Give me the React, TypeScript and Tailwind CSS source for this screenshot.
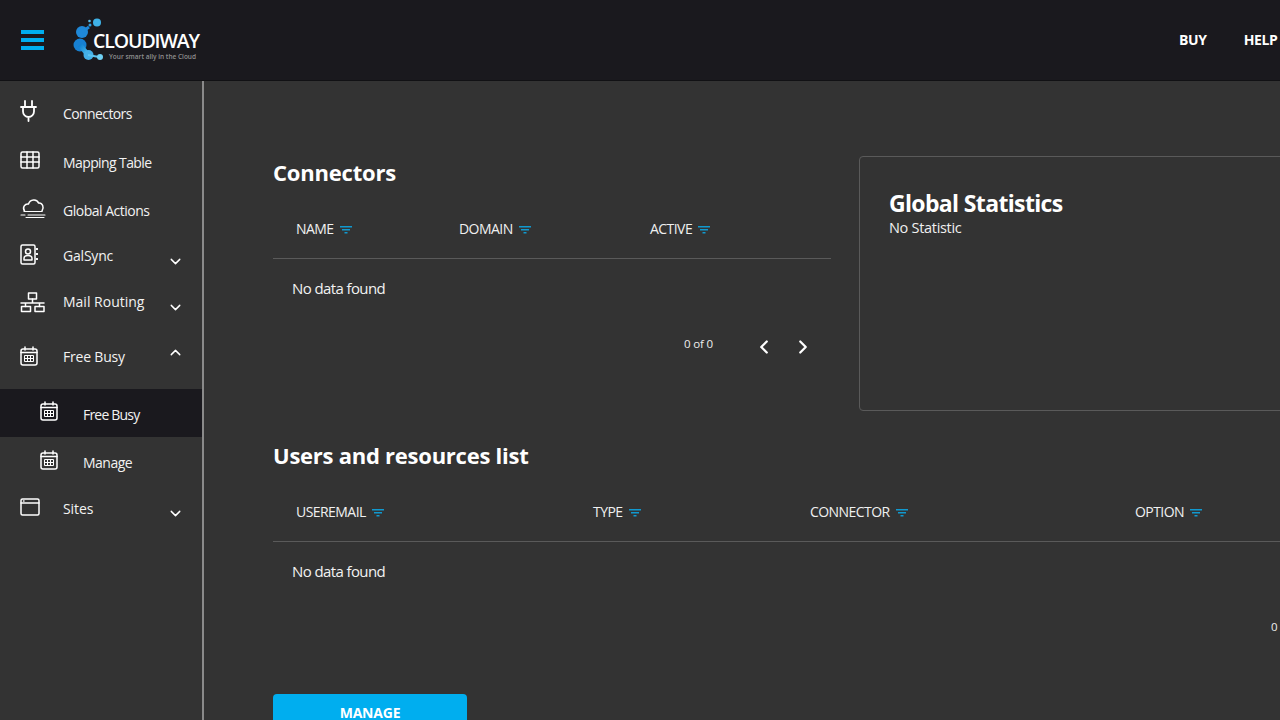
import type { ReactNode } from "react";
import { ChevronDown, ChevronUp, ChevronLeft, ChevronRight } from "lucide-react";

const FONT = "font-['Open_Sans','Noto_Sans',sans-serif]";

function Svg({ w, h, children }: { w: number; h: number; children: ReactNode }) {
  return (
    <svg
      width={w}
      height={h}
      viewBox={`0 0 ${w} ${h}`}
      fill="none"
      stroke="#ffffff"
      strokeWidth="1.5"
      strokeLinecap="round"
      strokeLinejoin="round"
    >
      {children}
    </svg>
  );
}

const PlugIcon = () => (
  <Svg w={18} h={22}>
    <path d="M5 1v6M12 1v6M1 7h15M3 7v4.500a5.500 5.500 0 0 0 11 0V7M8.500 17v4" strokeWidth="1.800" />
  </Svg>
);

const TableIcon = () => (
  <Svg w={20} h={18}>
    <rect x="1" y="1" width="18" height="16" rx="1.500" />
    <path d="M1 6h18M1 11h18M7 1v16M13 1v16" />
  </Svg>
);

const CloudIcon = () => (
  <Svg w={26} h={21}>
    <path d="M4.500 14c-2.500-4 .5-7.500 4-7C10 2 17 1.500 18.500 6c4-.5 6 4.500 3.500 8" />
    <path d="M4 14.500h18M1 18h4M8 18h17M6 20.500h18" strokeWidth="1.100" />
  </Svg>
);

const ContactIcon = () => (
  <Svg w={18} h={21}>
    <rect x="1" y="1" width="14" height="19" rx="1.500" />
    <circle cx="8" cy="7.500" r="2.500" />
    <path d="M4 16v-1.500c0-2 1.500-3 4-3s4 1 4 3V16z" />
    <path d="M16.500 5h1M16.500 10h1M16.500 15h1" strokeWidth="1.800" />
  </Svg>
);

const NetworkIcon = () => (
  <Svg w={25} h={21}>
    <rect x="8.500" y="1" width="8" height="6" />
    <path d="M12.500 7v4M1 11h23M5.500 11v3.500M19.500 11v3.500" />
    <rect x="1.500" y="14.500" width="9" height="5" />
    <rect x="15" y="14.500" width="9" height="5" />
  </Svg>
);

const CalendarIcon = () => (
  <Svg w={18} h={20}>
    <rect x="1" y="3" width="16" height="16" rx="2" />
    <path d="M5 1v3M13 1v3M1 6.500h16" />
    <path d="M4.500 9.500h9v6h-9zM7.500 9.500v6M10.500 9.500v6M4.500 12.500h9" strokeWidth="1" strokeLinecap="butt" strokeLinejoin="miter" />
  </Svg>
);

const WindowIcon = () => (
  <Svg w={20} h={18}>
    <rect x="1" y="1" width="18" height="16" rx="1.500" />
    <path d="M1 5h18" />
    <path d="M3.500 3h.5" />
  </Svg>
);

function FilterIcon() {
  return (
    <svg width="12" height="8" viewBox="0 0 12 8" className="ml-[6px] mt-[3px] shrink-0">
      <path d="M0 0h12v1.500H0zM2 3h8v1.500H2zM4.500 6h3v1.500h-3z" fill="#1199cf" />
    </svg>
  );
}

function Logo() {
  return (
    <div className="relative mt-[6px] h-[50px] w-[130px]">
      <svg width="36" height="46" viewBox="0 0 36 46" className="absolute left-0 top-0">
        <defs>
          <linearGradient id="lg" x1="0" y1="0" x2="1" y2="1">
            <stop offset="0" stopColor="#0f7fd0" />
            <stop offset="1" stopColor="#4fc3f0" />
          </linearGradient>
        </defs>
        <circle cx="24" cy="4.500" r="4" fill="#3fb2e8" />
        <circle cx="16.500" cy="3" r="1.300" fill="#58bdec" />
        <circle cx="17" cy="7" r="1.500" fill="#2f9fe0" />
        <circle cx="9" cy="14" r="6" fill="#1f88d8" />
        <path d="M9 14 L16 9" stroke="#1f88d8" strokeWidth="3" />
        <circle cx="7" cy="27" r="6.500" fill="#1780d2" />
        <path d="M7 27 L15 37" stroke="url(#lg)" strokeWidth="5" />
        <circle cx="15.500" cy="37" r="5" fill="#44b0e8" />
        <path d="M15 37 L26 39" stroke="#5cc4f0" strokeWidth="2" />
        <circle cx="27" cy="39" r="3" fill="#6fd0f4" />
      </svg>
      <span className={`absolute left-[20px] top-[11px] text-[19.500px] font-semibold leading-[24px] tracking-[-1.100px] text-white ${FONT}`}>
        CLOUDIWAY
      </span>
      <span className={`absolute left-[36px] top-[34px] whitespace-nowrap text-[6.500px] font-semibold leading-[10px] text-[#8f8f8f] ${FONT}`}>
        Your smart ally in the Cloud
      </span>
    </div>
  );
}

type NavRow = {
  label: string;
  icon: ReactNode;
  h: string;
  track: string;
  iconY: string;
  chevron?: "down" | "up";
  sub?: boolean;
  active?: boolean;
};

const navRows: NavRow[] = [
  { label: "Connectors", icon: <PlugIcon />, h: "h-[49px]", track: "tracking-[-0.6px]", iconY: "-translate-y-[3px]" },
  { label: "Mapping Table", icon: <TableIcon />, h: "h-[48px]", track: "tracking-[-0.6px]", iconY: "-translate-y-[2px]" },
  { label: "Global Actions", icon: <CloudIcon />, h: "h-[47px]", track: "tracking-[-0.5px] translate-y-[1px]", iconY: "-translate-y-[2px]" },
  { label: "GalSync", icon: <ContactIcon />, h: "h-[46px]", track: "tracking-[-0.2px] -translate-y-[1px]", iconY: "-translate-y-[2px]", chevron: "down" },
  { label: "Mail Routing", icon: <NetworkIcon />, h: "h-[46px]", track: "tracking-[0px] -translate-y-[1px]", iconY: "translate-y-0", chevron: "down" },
  { label: "Free Busy", icon: <CalendarIcon />, h: "h-[64px] pb-[2px]", track: "tracking-[-0.2px]", iconY: "translate-y-0", chevron: "up" },
  { label: "Free Busy", icon: <CalendarIcon />, h: "h-[48px]", track: "tracking-[-0.8px] translate-y-[1px]", iconY: "-translate-y-[2px]", sub: true, active: true },
  { label: "Manage", icon: <CalendarIcon />, h: "h-[48px]", track: "tracking-[-0.5px] translate-y-[1px]", iconY: "-translate-y-[1px]", sub: true },
  { label: "Sites", icon: <WindowIcon />, h: "h-[46px]", track: "tracking-[-0.1px]", iconY: "-translate-y-[1px]", chevron: "down" },
];

function Sidebar() {
  return (
    <aside className="h-full w-[204px] shrink-0 border-r-2 border-[#8a8a8a] pt-[8px]">
      {navRows.map((r, i) => (
        <div
          key={i}
          className={`relative flex items-center ${r.h} ${r.sub ? "pl-[40px]" : "pl-[20px]"} ${r.active ? "bg-[#1a191e]" : ""}`}
        >
          <span className={`flex w-[43px] ${r.iconY}`}>{r.icon}</span>
          <span className={`text-[14px] text-[#f2f2f2] ${r.track}`}>{r.label}</span>
          {r.chevron === "down" && (
            <ChevronDown size={17} strokeWidth={2} className="absolute left-[167px] top-[50%] -translate-y-[3px] text-white" />
          )}
          {r.chevron === "up" && (
            <ChevronUp size={17} strokeWidth={2} className="absolute left-[167px] top-[50%] -translate-y-[13px] text-white" />
          )}
        </div>
      ))}
    </aside>
  );
}

function HeaderCell({ label }: { label: string }) {
  return (
    <div className="flex items-center text-[14px] tracking-[-0.55px] text-[#f0f0f0]">
      {label}
      <FilterIcon />
    </div>
  );
}

function DataTable({ columns, cols }: { columns: string[]; cols: string }) {
  return (
    <div>
      <div className={`grid h-[61px] items-center border-b border-[#5a5a5a] pl-[23px] ${cols}`}>
        {columns.map((c) => (
          <HeaderCell key={c} label={c} />
        ))}
      </div>
      <div className="flex h-[59px] items-center pl-[19px] text-[15px] tracking-[-0.6px] text-[#f2f2f2]">No data found</div>
    </div>
  );
}

export default function App() {
  return (
    <div className={`flex h-screen w-[1280px] flex-col overflow-hidden bg-[#333333] ${FONT}`}>
      <header className="flex h-[81px] shrink-0 items-center justify-between border-b border-[#111114] bg-[#1a191e] pl-[21px]">
        <div className="flex items-center">
          <div className="flex w-[52px] flex-col gap-[4px]">
            <span className="h-[4px] w-[23px] bg-[#00aeef]" />
            <span className="h-[4px] w-[23px] bg-[#00aeef]" />
            <span className="h-[4px] w-[23px] bg-[#00aeef]" />
          </div>
          <Logo />
        </div>
        <nav className="-mt-[2px] flex w-[101px] shrink-0 gap-[37px] overflow-hidden text-[14px] font-bold tracking-[-0.35px] text-white">
          <span>BUY</span>
          <span>HELP</span>
        </nav>
      </header>

      <div className="flex min-h-0 flex-1">
        <Sidebar />
        <main className="min-w-0 flex-1 pl-[69px] pt-[75px]">
          <div className="w-[1143px]">
            <div className="flex gap-[28px]">
              <section className="w-[558px]">
                <h2 className="h-[42px] text-[22px] font-bold leading-[32px] tracking-[-0.2px] text-white">Connectors</h2>
                <DataTable columns={["NAME", "DOMAIN", "ACTIVE"]} cols="grid-cols-[163px_191px_1fr]" />
                <div className="flex h-[52px] items-start justify-end pr-[17px] pt-[14px] text-white">
                  <span className="mr-[40px] mt-[3px] text-[11.500px] tracking-[-0.15px] text-[#eeeeee]">0 of 0</span>
                  <ChevronLeft size={22} strokeWidth={2.500} className="mr-[17px] mt-[4px]" />
                  <ChevronRight size={22} strokeWidth={2.500} className="mt-[4px]" />
                </div>
              </section>
              <section className="h-[255px] flex-1 rounded border border-[#5a5a5a] pl-[29px] pt-[29px]">
                <h2 className="text-[23px] font-bold leading-[34px] tracking-[-0.65px] text-white">Global Statistics</h2>
                <p className="-mt-[2px] text-[14.500px] leading-[20px] tracking-[-0.3px] text-[#f0f0f0]">No Statistic</p>
              </section>
            </div>

            <section className="mt-[28px]">
              <h2 className="h-[42px] text-[22px] font-bold leading-[32px] tracking-[-0.25px] text-white">Users and resources list</h2>
              <DataTable columns={["USEREMAIL", "TYPE", "CONNECTOR", "OPTION"]} cols="grid-cols-[297px_217px_325px_1fr]" />
              <div className="flex h-[93px] pl-[998px] pt-[17px] text-[11.500px] text-[#eeeeee]">0</div>
            </section>

            <button className="h-[36px] w-[194px] rounded bg-[#00aeef] text-[14px] font-bold tracking-[-0.2px] text-white">MANAGE</button>
          </div>
        </main>
      </div>
    </div>
  );
}
